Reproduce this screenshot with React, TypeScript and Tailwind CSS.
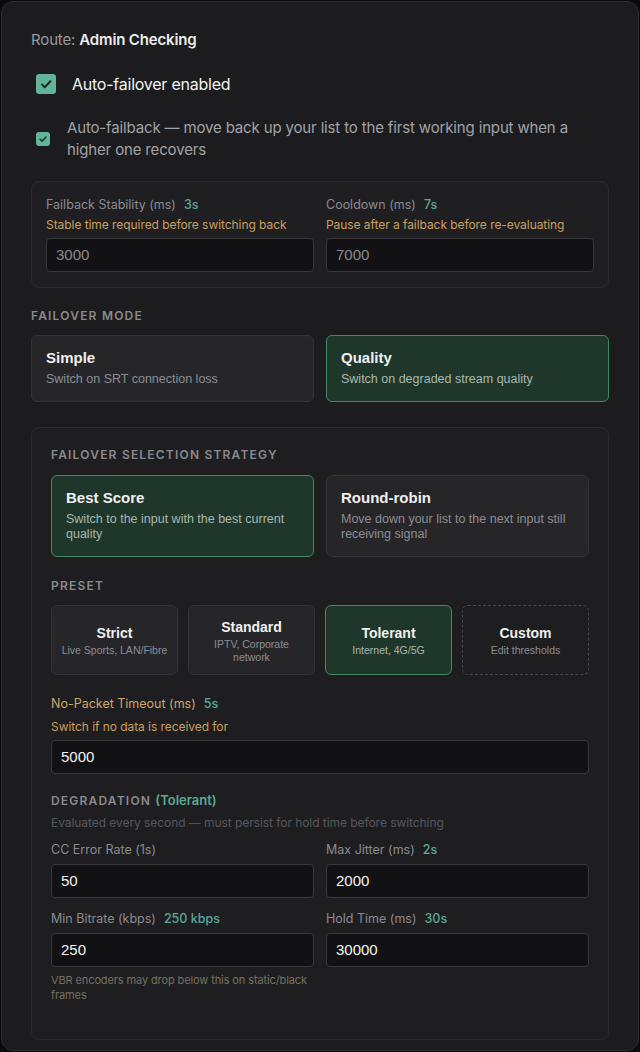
import React from "react";

const sans = "font-['Inter','Noto_Sans',sans-serif]";
const helv = "font-['Liberation_Sans','Arial',sans-serif]";

const Check = ({ size }: { size: number }) => (
  <span
    className="flex shrink-0 items-center justify-center rounded-[3px] bg-[#5fb49b]"
    style={{ width: size, height: size }}
  >
    <svg viewBox="0 0 24 24" width={size * 0.72} height={size * 0.72} fill="none" stroke="#1c2a26" strokeWidth={3.4} strokeLinecap="round" strokeLinejoin="round">
      <path d="M5 12.5l4.5 4.5L19 7" />
    </svg>
  </span>
);

const Label = ({ text, value, amber }: { text: string; value?: string; amber?: boolean }) => (
  <p className={`${sans} h-4 text-[12.5px] leading-4 ${amber ? "text-[#cfa565]" : "text-[#8b8b8f]"}`}>
    {text}
    {value && <span className="ml-2 font-medium text-[#5aa896]">{value}</span>}
  </p>
);

const Hint = ({ text }: { text: string }) => (
  <p className={`${sans} text-[12px] leading-4 tracking-[-0.005em] text-[#c99f60]`}>{text}</p>
);

const Input = ({ value, dim }: { value: string; dim?: boolean }) => (
  <div
    className={`${helv} flex h-[34px] items-center rounded-[4px] border border-[#38383c] bg-[#121214] px-[9px] text-[15px] ${
      dim ? "text-[#8a8a8e]" : "text-[#f2f2f2]"
    }`}
  >
    {value}
  </div>
);

const Section = ({ children }: { children: React.ReactNode }) => (
  <p className={`${sans} text-[12px] font-semibold uppercase leading-4 tracking-[0.1em] text-[#8a8a8e]`}>{children}</p>
);

const OptionCard = ({ title, desc, active }: { title: string; desc: string; active?: boolean }) => (
  <div
    className={`${helv} flex-1 rounded-md border-[1.5px] pl-[14px] pr-[10px] pt-[11.5px] pb-[14px] ${
      active ? "border-[#3f8a60] bg-[#1f372a]" : "border-[#333336] bg-[#262629]"
    }`}
  >
    <p className="text-[15px] font-bold leading-5 text-[#f0f0f0]">{title}</p>
    <p className={`mt-[4.5px] text-[12.5px] leading-[15px] ${active ? "text-[#a9b8ae]" : "text-[#8d8d91]"}`}>{desc}</p>
  </div>
);

const Preset = ({ title, desc, active, dashed }: { title: string; desc: string; active?: boolean; dashed?: boolean }) => (
  <div
    className={`${helv} flex h-[70px] flex-col items-center justify-center rounded-md px-[6px] text-center ${
      active
        ? "border-[1.5px] border-[#3f8a60] bg-[#1f372a]"
        : dashed
        ? "border border-dashed border-[#48484c]"
        : "border border-[#333336] bg-[#262629]"
    }`}
  >
    <p className="text-[14px] font-bold leading-5 text-[#f0f0f0]">{title}</p>
    <p className={`mt-[1px] text-[10.5px] leading-[13px] ${active ? "text-[#a9b8ae]" : "text-[#8d8d91]"}`}>{desc}</p>
  </div>
);

export default function App() {
  return (
    <div className="h-[1052px] w-[640px] bg-[#0b0b0c] p-px">
      <div className={`${sans} h-[1050px] rounded-xl border border-[#2c2c30] bg-[#1c1c1f] px-[29px] pt-[28px]`}>
        <p className="text-[15px] leading-5 tracking-[-0.01em] text-[#9a9a9e]">
          Route: <span className="font-semibold text-[#ececec]">Admin Checking</span>
        </p>

        <div className="mt-[23px] flex h-[22px] items-center gap-[16px] pl-[5px]">
          <Check size={20} />
          <span className="text-[16px] tracking-[-0.015em] text-[#f2f2f2]">Auto-failover enabled</span>
        </div>

        <div className="mt-[22px] flex items-center gap-[17px] pl-[5px]">
          <Check size={14} />
          <p className="text-[15px] leading-[22px] tracking-[-0.01em] text-[#a2a2a6]">
            Auto-failback — move back up your list to the first working input when a higher one recovers
          </p>
        </div>

        <div className="mt-[20px] flex gap-3 rounded-lg border border-[#2a2a2d] bg-[#1f1f22] px-[14px] pt-[15px] pb-[15px]">
          <div className="flex flex-1 flex-col">
            <Label text="Failback Stability (ms)" value="3s" />
            <div className="mt-[4px]"><Hint text="Stable time required before switching back" /></div>
            <div className="mt-[5px]"><Input value="3000" dim /></div>
          </div>
          <div className="flex flex-1 flex-col">
            <Label text="Cooldown (ms)" value="7s" />
            <div className="mt-[4px]"><Hint text="Pause after a failback before re-evaluating" /></div>
            <div className="mt-[5px]"><Input value="7000" dim /></div>
          </div>
        </div>

        <div className="mt-[20px]"><Section>Failover Mode</Section></div>
        <div className="mt-[11px] flex gap-3">
          <OptionCard title="Simple" desc="Switch on SRT connection loss" />
          <OptionCard title="Quality" desc="Switch on degraded stream quality" active />
        </div>

        <div className="mt-[25px] h-[613px] rounded-lg border border-[#2a2a2d] bg-[#1e1e21] px-[19px] pt-[19px]">
          <Section>Failover Selection Strategy</Section>
          <div className="mt-[12px] flex gap-3">
            <OptionCard title="Best Score" desc="Switch to the input with the best current quality" active />
            <OptionCard title="Round-robin" desc="Move down your list to the next input still receiving signal" />
          </div>

          <div className="mt-[21px]"><Section>Preset</Section></div>
          <div className="mt-[11px] grid grid-cols-4 gap-[10px]">
            <Preset title="Strict" desc="Live Sports, LAN/Fibre" />
            <Preset title="Standard" desc="IPTV, Corporate network" />
            <Preset title="Tolerant" desc="Internet, 4G/5G" active />
            <Preset title="Custom" desc="Edit thresholds" dashed />
          </div>

          <div className="mt-[21px]"><Label text="No-Packet Timeout (ms)" value="5s" amber /></div>
          <div className="mt-[7px]"><Hint text="Switch if no data is received for" /></div>
          <div className="mt-[5px]"><Input value="5000" /></div>

          <p className="mt-[18px] h-4 text-[12px] font-semibold leading-4 tracking-[0.1em] text-[#8a8a8e]">
            DEGRADATION <span className="text-[13px] tracking-normal text-[#5aa896]">(Tolerant)</span>
          </p>
          <p className="mt-[7px] text-[12px] leading-4 tracking-[-0.005em] text-[#56565a]">
            Evaluated every second — must persist for hold time before switching
          </p>

          <div className="mt-[11px] grid grid-cols-2 gap-x-3">
            <div>
              <Label text="CC Error Rate (1s)" />
              <div className="mt-[6px]"><Input value="50" /></div>
              <div className="mt-[13px]"><Label text="Min Bitrate (kbps)" value="250 kbps" /></div>
              <div className="mt-[6px]"><Input value="250" /></div>
              <p className="mt-[6px] text-[11px] leading-[15px] tracking-[-0.01em] text-[#75715f]">
                VBR encoders may drop below this on static/black frames
              </p>
            </div>
            <div>
              <Label text="Max Jitter (ms)" value="2s" />
              <div className="mt-[6px]"><Input value="2000" /></div>
              <div className="mt-[13px]"><Label text="Hold Time (ms)" value="30s" /></div>
              <div className="mt-[6px]"><Input value="30000" /></div>
            </div>
          </div>
        </div>
      </div>
    </div>
  );
}
